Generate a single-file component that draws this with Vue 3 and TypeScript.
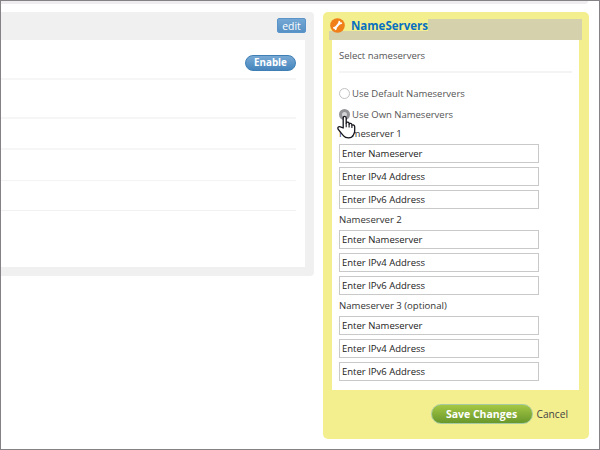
<script setup lang="ts">
import { ref } from 'vue'

interface Group { title: string }
const groups: Group[] = [
  { title: 'Nameserver 1' },
  { title: 'Nameserver 2' },
  { title: 'Nameserver 3 (optional)' },
]
const fields: string[] = ['Enter Nameserver', 'Enter IPv4 Address', 'Enter IPv6 Address']
const mode = ref<'default' | 'own'>('own')
</script>

<template>
  <div class="frame">
    <div class="strip"></div>
    <main class="columns">
      <section class="details">
        <header class="details-head"><button class="edit">edit</button></header>
        <div class="details-body">
          <div class="row first"><button class="enable">Enable</button></div>
          <div class="row second"></div>
          <div class="row third"></div>
          <div class="row fourth"></div>
          <div class="row fifth"></div>
        </div>
      </section>

      <section class="panel">
        <header class="panel-head">
          <div class="title-wrap">
            <svg class="tool" viewBox="0 0 15 15">
              <circle cx="7.5" cy="7.5" r="7.3" fill="#ef7f16" />
              <path d="M5.2 10.1 9.8 4.8" stroke="#fff" stroke-width="2.2" />
              <path d="M8.6 2.8 8.2 5.2 9.9 6.6 12.2 5.7 11.9 4.4 10.5 4.6 10 3.1ZM3.1 9.3 5.2 8.5 6.8 9.9 6.3 12 4.9 12.3 4.8 10.9 3.2 10.6Z" fill="#fff" />
            </svg>
            <h2><span>NameServers</span></h2>
          </div>
        </header>
        <div class="form">
          <p class="lead"><span>Select nameservers</span></p>
          <div class="option" @click="mode = 'default'">
            <i class="radio" :class="{ on: mode === 'default' }"></i><span>Use Default Nameservers</span>
          </div>
          <div class="option" @click="mode = 'own'">
            <i class="radio" :class="{ on: mode === 'own' }"></i><span>Use Own Nameservers</span>
            <svg class="hand" viewBox="0 0 19 24">
              <path d="M6.2 13V3.3C6.2.6 9.2.6 9.2 3.3V8.2C9.7 6.7 12 7 12.1 8.5V9.1C12.9 7.9 14.8 8.4 14.9 9.8V10.3C16.2 9.3 17.7 10.2 17.7 11.7V15.7C17.7 18.2 16.7 18.9 16.3 20C15.3 22.3 13.5 22.9 11.5 22.9 9 22.9 7.6 22.2 6.6 20.9 4.6 18.6 2.6 16.4 1.1 14.2.3 12.5 1.8 10.9 3.5 11.9Z" fill="#fff" stroke="#15151d" stroke-width="1.3" stroke-linejoin="round" />
              <path d="M9.2 8V12.3M12.1 9V12.5M14.9 10.3V13" stroke="#15151d" stroke-width="1.1" />
            </svg>
          </div>
          <div v-for="group in groups" :key="group.title" class="group">
            <h3><span>{{ group.title }}</span></h3>
            <div v-for="field in fields" :key="field" class="field"><span>{{ field }}</span></div>
          </div>
        </div>
        <footer class="actions">
          <button class="save">Save Changes</button>
          <a class="cancel">Cancel</a>
        </footer>
      </section>
    </main>
  </div>
</template>

<style>
body { margin: 0; background: #fff; }
</style>

<style scoped>
* { box-sizing: border-box; }
.frame {
  width: 600px;
  height: 450px;
  border: 1px solid #848284;
  background: #fff;
  overflow: hidden;
  font-family: "Open Sans", "Noto Sans", sans-serif;
  font-size: 9.5px;
  line-height: 14px;
  color: #333;
}
.strip { width: 587px; height: 3px; background: #efedef; border-radius: 0 0 3px 0; }
.columns { display: flex; align-items: flex-start; gap: 9px; padding-top: 8px; }
.details { width: 313px; height: 264px; padding: 0 9px 9px 0; background: #f0f0f0; border-radius: 0 4px 4px 0; }
.details-head { height: 28px; display: flex; justify-content: flex-end; padding: 6px 0 0; margin-right: -1px; }
button { font-family: inherit; padding: 0; margin: 0; }
.edit {
  width: 29px; height: 15px; border: 1px solid #5a94c8; border-radius: 2px;
  background: linear-gradient(#74a7d4, #5791c5); color: #fff; font-size: 10.4px; line-height: 12px;
}
.details-body { height: 227px; background: #fff; padding-right: 9px; }
.row { border-bottom: 2px solid #f6f6f6; }
.first { height: 40px; display: flex; justify-content: flex-end; padding-top: 15px; }
.second { height: 39px; }
.third { height: 31px; }
.fourth { height: 31px; border-bottom: 1px solid #f3f3f3; }
.fifth { height: 30px; border-bottom: 1px solid #f1f1f1; }
.enable {
  width: 51px; height: 16px; border: 1px solid #3f7fb5; border-radius: 8px;
  background: linear-gradient(#78a9d4, #4685bd); color: #fff; font-size: 9.8px; font-weight: 700; line-height: 12px;
}
.panel { width: 266px; height: 427px; background: #f4ef8e; border-radius: 5px; padding: 7px 7px 0 6px; }
.panel-head { height: 21px; background: #d5d1ac; }
.title-wrap { width: 99px; height: 12px; background: #f4ef8e; display: flex; align-items: center; gap: 6px; }
.tool { width: 15px; height: 15px; flex: none; margin-left: 1px; }
h2, h3, p { margin: 0; font-weight: 400; }
h2 { font-size: 11.5px; line-height: 13px; font-weight: 700; color: #0870c0; }
.form { margin: 0 3px; width: 247px; height: 350px; background: #fff; padding: 9px 7px 0; }
.lead { height: 24px; border-bottom: 2px solid #f4f4f4; color: #555; margin-bottom: 12px; }
.option { position: relative; display: flex; align-items: center; height: 17px; margin-bottom: 4px; gap: 2px; color: #555; }
.radio { width: 11px; height: 11px; border-radius: 50%; border: 1px solid #c2c2c2; background: #fff; flex: none; }
.radio.on { border: 3px solid #929297; background: #d3d3d6; }
.hand { position: absolute; left: -2px; top: 9px; width: 19px; height: 24px; }
.group { height: 86px; }
h3 { height: 17px; font-size: 9.6px; line-height: 14px; color: #333; }
.field { width: 200px; height: 19px; border: 1px solid #c9c9c9; margin-bottom: 4px; padding-left: 2px; line-height: 18px; color: #222; }
.actions { display: flex; justify-content: flex-end; align-items: center; gap: 4px; height: 20px; margin: 14px 14px 0 0; }
.save {
  width: 102px; height: 20px; border: 1px solid #a6cba3; border-radius: 10px;
  background: linear-gradient(#a5c844, #69972b); color: #fff; font-weight: 700; font-size: 10.5px; line-height: 17px;
}
.cancel { color: #444; font-size: 10.2px; }
</style>
